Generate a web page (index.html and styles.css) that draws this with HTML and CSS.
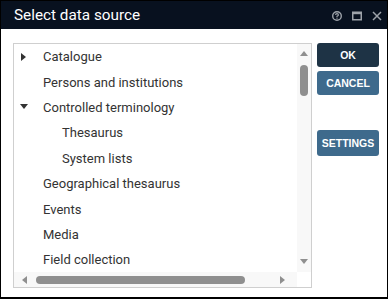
FILE: index.html
```html
<!DOCTYPE html>
<html lang="en">
<head>
  <meta charset="UTF-8">
  <title>Select data source</title>
  <link rel="stylesheet" href="styles.css">
</head>
<body>
  <div class="dialog">
    <div class="titlebar">
      <h1>Select data source</h1>
      <div class="window-tools">
        <svg class="tool" width="10" height="10" viewBox="0 0 10 10">
          <circle cx="5" cy="5" r="4.3" fill="none" stroke="#9ea3aa" stroke-width="1.4"/>
          <path d="M3.6 4 Q3.6 2.7 5 2.7 Q6.4 2.7 6.4 3.9 Q6.4 4.7 5 5.2 V6" fill="none" stroke="#9ea3aa" stroke-width="1.2"/>
          <rect x="4.4" y="6.6" width="1.2" height="1.1" fill="#9ea3aa"/>
        </svg>
        <svg class="tool" width="10" height="10" viewBox="0 0 10 10">
          <rect x="0.75" y="1.25" width="8.5" height="7.5" fill="none" stroke="#9ea3aa" stroke-width="1.5"/>
          <rect x="0.75" y="1" width="8.5" height="2.2" fill="#9ea3aa"/>
        </svg>
        <svg class="tool" width="10" height="10" viewBox="0 0 10 10">
          <path d="M1 1 L9 9 M9 1 L1 9" stroke="#9ea3aa" stroke-width="1.5"/>
        </svg>
      </div>
    </div>

    <div class="content">
      <div class="listbox">
        <ul class="tree">
          <li class="node"><span class="twisty closed"></span>Catalogue</li>
          <li class="node"><span class="twisty"></span>Persons and institutions</li>
          <li class="node"><span class="twisty open"></span>Controlled terminology</li>
          <li class="node child"><span class="twisty"></span>Thesaurus</li>
          <li class="node child"><span class="twisty"></span>System lists</li>
          <li class="node"><span class="twisty"></span>Geographical thesaurus</li>
          <li class="node"><span class="twisty"></span>Events</li>
          <li class="node"><span class="twisty"></span>Media</li>
          <li class="node"><span class="twisty"></span>Field collection</li>
        </ul>
        <div class="vscroll">
          <span class="arrow up"></span>
          <div class="vtrack"><div class="vthumb"></div></div>
          <span class="arrow down"></span>
        </div>
        <div class="hscroll">
          <span class="arrow left"></span>
          <div class="htrack"><div class="hthumb"></div></div>
          <span class="arrow right"></span>
        </div>
        <div class="corner"></div>
      </div>

      <div class="actions">
        <button class="btn btn-ok">OK</button>
        <button class="btn btn-secondary">CANCEL</button>
        <button class="btn btn-secondary btn-settings">SETTINGS</button>
      </div>
    </div>
  </div>
</body>
</html>
```

FILE: styles.css
```css
body {
  margin: 0;
  background: #fff;
  font-family: Roboto, 'Liberation Sans', sans-serif;
}

.dialog {
  width: 388px;
  height: 299px;
  box-sizing: border-box;
  border: 1px solid #000;
  border-bottom-width: 2px;
  display: flex;
  flex-direction: column;
  background: #fff;
}

.titlebar {
  height: 28px;
  background: #08111f;
  display: flex;
  align-items: center;
  justify-content: space-between;
  padding: 0 5px 0 13px;
}

.titlebar h1 {
  margin: 0;
  color: #fff;
  font-size: 15.3px;
  font-weight: 400;
}

.window-tools {
  display: flex;
  gap: 10px;
  align-items: center;
  padding-top: 1px;
}

.tool {
  display: block;
}

.content {
  display: flex;
  padding: 14px 0 0 12px;
}

.listbox {
  width: 299px;
  height: 245px;
  box-sizing: border-box;
  border: 1px solid #cfcfcf;
  display: grid;
  grid-template-columns: 1fr 14px;
  grid-template-rows: 1fr 15px;
}

.tree {
  list-style: none;
  margin: 0;
  padding: 0;
  overflow: hidden;
}

.node {
  height: 25.4px;
  display: flex;
  align-items: center;
  font-size: 13px;
  color: #333;
  white-space: nowrap;
}

.twisty {
  width: 29px;
  height: 8px;
  flex: none;
  position: relative;
}

.twisty.closed::before {
  content: '';
  position: absolute;
  left: 7px;
  top: 0;
  border-left: 5px solid #333;
  border-top: 4px solid transparent;
  border-bottom: 4px solid transparent;
}

.twisty.open::before {
  content: '';
  position: absolute;
  left: 6px;
  top: 1px;
  border-top: 5px solid #333;
  border-left: 4px solid transparent;
  border-right: 4px solid transparent;
}

.node.child .twisty {
  width: 48px;
}

/* fake scrollbars */
.vscroll {
  background: #f8f8f8;
  display: flex;
  flex-direction: column;
  align-items: center;
  padding: 7px 0 8px 0;
}

.vtrack {
  flex: 1;
  width: 8px;
  padding-top: 9px;
}

.vthumb {
  height: 31px;
  background: #8f8f8f;
  border-radius: 4px;
}

.hscroll {
  background: #f8f8f8;
  display: flex;
  align-items: center;
  padding: 0 12px 0 8px;
}

.htrack {
  flex: 1;
  height: 8px;
  padding: 0 35px 0 9px;
}

.hthumb {
  height: 8px;
  background: #8f8f8f;
  border-radius: 4px;
}

.corner {
  background: #fff;
}

.arrow {
  width: 0;
  height: 0;
  flex: none;
}

.arrow.up {
  border-bottom: 5px solid #8f8f8f;
  border-left: 4px solid transparent;
  border-right: 4px solid transparent;
}

.arrow.down {
  border-top: 5px solid #8f8f8f;
  border-left: 4px solid transparent;
  border-right: 4px solid transparent;
}

.arrow.left {
  border-right: 5px solid #8f8f8f;
  border-top: 4px solid transparent;
  border-bottom: 4px solid transparent;
}

.arrow.right {
  border-left: 5px solid #8f8f8f;
  border-top: 4px solid transparent;
  border-bottom: 4px solid transparent;
}

.actions {
  display: flex;
  flex-direction: column;
  gap: 4px;
  margin-left: 5px;
}

.btn {
  width: 62px;
  height: 24px;
  border: none;
  border-radius: 3px;
  color: #fff;
  font-family: 'Liberation Sans', Arial, sans-serif;
  font-size: 10.5px;
  font-weight: 700;
  padding: 0;
  cursor: pointer;
}

.btn-ok {
  background: #1e3345;
}

.btn-secondary {
  background: #3e6a8c;
}

.btn-settings {
  margin-top: 31px;
  height: 26px;
}
```
